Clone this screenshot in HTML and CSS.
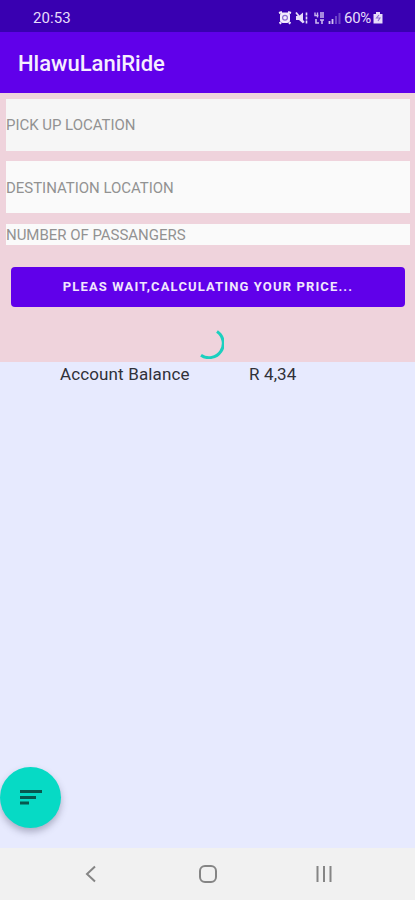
FILE: index.html
```
<!DOCTYPE html>
<html lang="en">
<head>
  <meta charset="UTF-8" />
  <meta name="viewport" content="width=device-width, initial-scale=1.0" />
  <title>HlawuLaniRide</title>
  <link rel="stylesheet" href="styles.css">
</head>
<body>
  <div class="phone">
    <div class="status-bar">
      <span class="time">20:53</span>
      <svg class="status-icons" width="64" height="16" viewBox="0 0 64 16">
        <!-- alarm -->
        <path d="M1 3l3-1M13 3l-3-1M3 12.500l-1.500 1M11 12.500l1.500 1" stroke="#f1eafc" stroke-width="2.200" />
        <rect x="2" y="2.500" width="10" height="10.500" rx="3" fill="#f1eafc" />
        <circle cx="7" cy="7.800" r="2.400" fill="none" stroke="#8c6bd3" stroke-width="1.200" />
        <!-- muted -->
        <path d="M18 6h3l4-3.500v11l-4-3.500h-3z" fill="#e6dcfa" />
        <path d="M18 2.500l8 10" stroke="#e6dcfa" stroke-width="1.800" />
        <path d="M28.500 2.500v11" stroke="#e6dcfa" stroke-width="1.600" stroke-dasharray="3 1" />
        <!-- network -->
        <path d="M37 2.500v3h3.500M39.500 2.500v5M42 3h4M42 5h4M42 7h4" fill="none" stroke="#cbb8ee" stroke-width="1.400" />
        <path d="M38 9v4h3M42 10h4M44 10v4" fill="none" stroke="#cbb8ee" stroke-width="1.600" />
        <!-- signal -->
        <path d="M51.500 11v3M54.500 9v5" stroke="#d2c2f1" stroke-width="1.800" />
        <path d="M58 6v8M61.500 3v11" stroke="#6f45c8" stroke-width="2" />
      </svg>
      <span class="battery">60%</span>
      <svg class="battery-icon" width="10" height="13" viewBox="0 0 10 13">
        <path d="M3 1h4v2h2.500v9.500h-9v-9.500h2.500z" fill="#e6dcfa" />
        <path d="M6 4l-2.500 3h3.500l-2 3" fill="none" stroke="#8c6bd3" stroke-width="1.100" />
      </svg>
    </div>

    <div class="app-bar">HlawuLaniRide</div>

    <div class="ride-form">
      <div class="field pickup">PICK UP LOCATION</div>
      <div class="field">DESTINATION LOCATION</div>
      <div class="field small">NUMBER OF PASSANGERS</div>
      <button class="price-btn">PLEAS WAIT,CALCULATING YOUR PRICE...</button>
      <svg class="spinner" width="34" height="34" viewBox="0 0 34 34">
        <path d="M27 6.500A14.200 14.200 0 0 1 11 30.200" fill="none" stroke="#1bd0bf" stroke-width="3" />
      </svg>
    </div>

    <div class="content">
      <div class="balance">
        <span class="balance-label">Account Balance</span>
        <span class="balance-value">R 4,34</span>
      </div>
      <button class="fab">
        <svg width="22" height="16" viewBox="0 0 22 16">
          <path d="M0 1.500h22M0 7.500h16M0 13h9" stroke="#07584f" stroke-width="3" />
        </svg>
      </button>
    </div>

    <div class="nav-bar">
      <svg width="20" height="20" viewBox="0 0 20 20">
        <path d="M14 2.500L6 10l8 7.500" />
      </svg>
      <svg width="20" height="20" viewBox="0 0 20 20">
        <rect x="2" y="2" width="16" height="16" rx="5" />
      </svg>
      <svg width="20" height="20" viewBox="0 0 20 20">
        <path d="M3.500 2v16M10 2v16M16.500 2v16" />
      </svg>
    </div>
  </div>
</body>
</html>
```
FILE: styles.css
```
* {
  box-sizing: border-box;
}
body {
  margin: 0;
  font-family: Roboto, "Liberation Sans", sans-serif;
}
button {
  border: none;
  padding: 0;
  font-family: inherit;
}
.phone {
  display: flex;
  flex-direction: column;
  width: 415px;
  height: 900px;
  overflow: hidden;
}
.status-bar {
  display: flex;
  align-items: center;
  height: 32px;
  padding: 3px 32px 0 33px;
  background: #3900b1;
  color: #e6dcfa;
}
.time {
  font-size: 15px;
  letter-spacing: 0.1px;
}
.status-icons {
  margin-left: auto;
}
.battery {
  margin-left: 2px;
  font-size: 15px;
  letter-spacing: -0.3px;
}
.battery-icon {
  margin-left: 2px;
}
.app-bar {
  height: 61px;
  padding-left: 18px;
  background: #6000ea;
  color: #f6effe;
  font-size: 22px;
  font-weight: 500;
  line-height: 63px;
}
.ride-form {
  display: flex;
  flex-direction: column;
  height: 269px;
  padding: 5.500px 5px 0 6px;
  background: #efd3dc;
}
.field {
  height: 52px;
  margin-bottom: 10.500px;
  background: #fafafa;
  color: #929292;
  font-size: 15px;
  letter-spacing: -0.03px;
  line-height: 54px;
}
.field.pickup {
  background: #f6f6f6;
  line-height: 53px;
}
.field.small {
  height: 21px;
  margin-bottom: 22px;
  line-height: 22px;
}
.price-btn {
  height: 40px;
  margin: 0 5px;
  border-radius: 4px;
  background: #6000ea;
  color: #f1e6fd;
  font-size: 13px;
  font-weight: 700;
  letter-spacing: 1.130px;
}
.spinner {
  margin: 18px 0 0 184px;
}
.content {
  display: flex;
  flex: 1;
  flex-direction: column;
  justify-content: space-between;
  align-items: flex-start;
  padding-bottom: 20px;
  background: #e7eafe;
}
.balance {
  display: flex;
  padding-left: 60px;
  color: #303139;
  font-size: 17px;
  letter-spacing: 0.13px;
  line-height: 25px;
}
.balance-label {
  width: 189px;
}
.fab {
  display: flex;
  align-items: center;
  justify-content: center;
  width: 61px;
  height: 61px;
  border-radius: 50%;
  background: #06dac5;
  box-shadow: 0 4px 7px rgba(60, 60, 90, 0.35);
}
.nav-bar {
  display: flex;
  justify-content: space-between;
  align-items: center;
  height: 52px;
  padding: 0 81px;
  background: #f1f1f1;
}
.nav-bar svg {
  fill: none;
  stroke: #858585;
  stroke-width: 2;
}
```
